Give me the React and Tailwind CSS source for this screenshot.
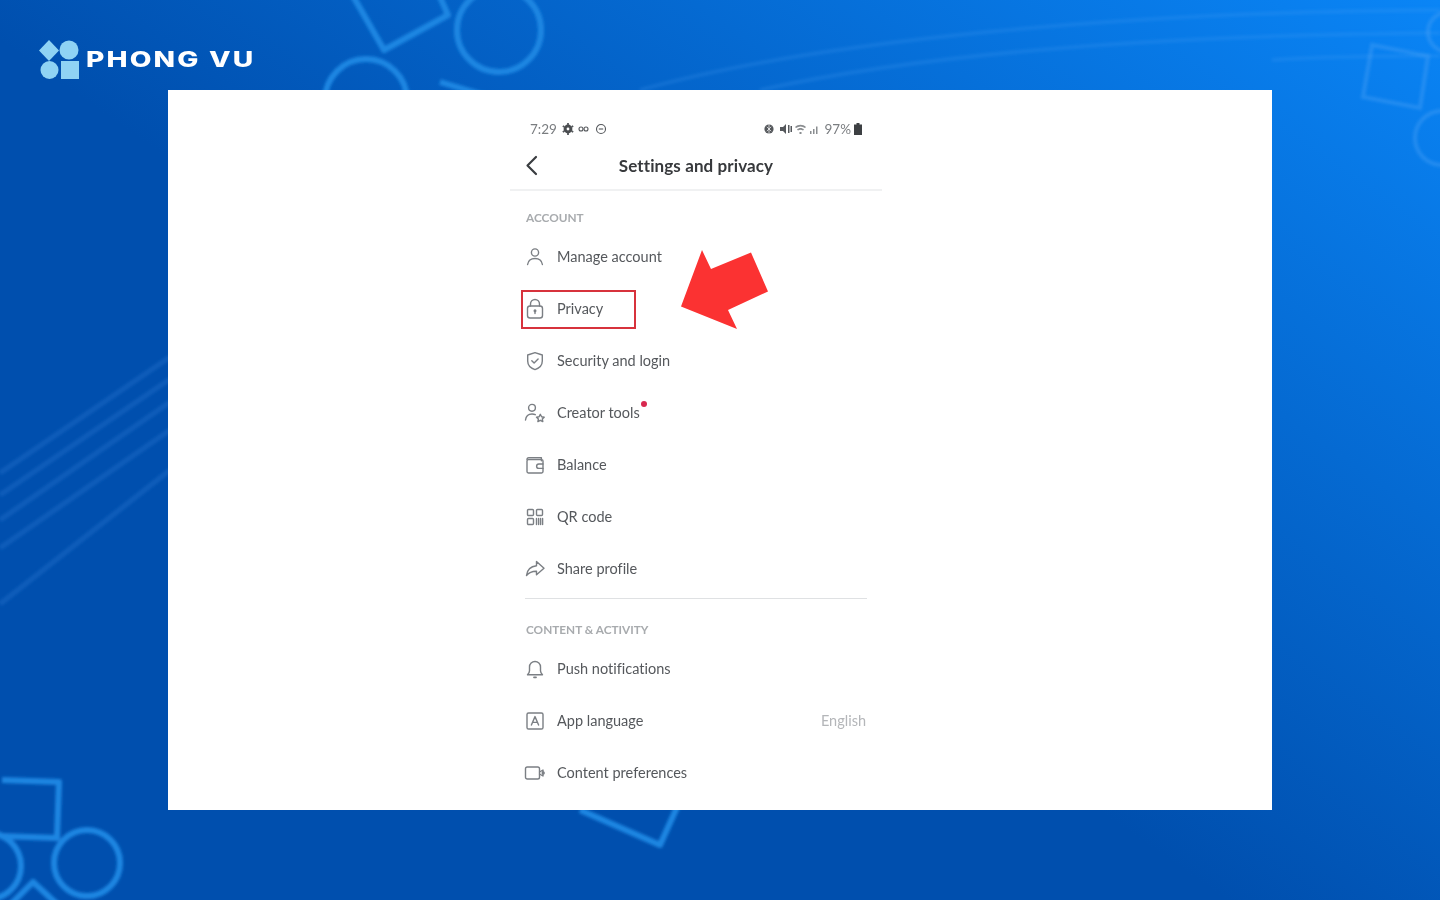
import React from "react";

const ink = "#7b7f84";

const Icon = ({children}) => (
  <svg width="22" height="22" viewBox="0 0 22 22" fill="none" stroke={ink} strokeWidth="1.4" strokeLinecap="round" strokeLinejoin="round">
    {children}
  </svg>
);

const accountRows = [
  {
    label: "Manage account",
    icon: (
      <>
        <circle cx="11" cy="6.500" r="3.600" />
        <path d="M3.600 18.500c.6-4 3.600-6 7.400-6s6.800 2 7.400 6" />
      </>
    ),
  },
  {
    label: "Privacy",
    icon: (
      <>
        <rect x="3.500" y="8" width="15" height="12" rx="2.500" />
        <path d="M6.500 8V6a4.500 4.500 0 0 1 9 0v2" />
        <path d="M11 12.500v3" />
        <circle cx="11" cy="12.800" r="0.800" />
      </>
    ),
  },
  {
    label: "Security and login",
    icon: (
      <>
        <path d="M11 2.600 18.300 5v6c0 4.400-3 7.200-7.300 8.600C6.700 18.200 3.700 15.400 3.700 11V5z" />
        <path d="m7.800 10.800 2.300 2.300 4-4" />
      </>
    ),
  },
  {
    label: "Creator tools",
    dot: true,
    icon: (
      <>
        <circle cx="8" cy="5.800" r="3.400" />
        <path d="M1.500 18c.5-4 3.300-6 6.500-6 1.200 0 2.300.2 3.300.7" />
        <path d="m16.300 12.300 1.300 2.500 2.600.4-1.900 1.800.5 2.600-2.500-1.300-2.400 1.300.5-2.600-1.900-1.800 2.600-.4z" />
      </>
    ),
  },
  {
    label: "Balance",
    icon: (
      <>
        <path d="M3 5.500A1.800 1.800 0 0 1 4.800 3.700h12.600v3" />
        <rect x="3" y="5.600" width="16" height="13.400" rx="1.400" />
        <path d="M19 10h-4.200a2.200 2.200 0 0 0 0 4.400H19" />
      </>
    ),
  },
  {
    label: "QR code",
    icon: (
      <>
        <rect x="3.500" y="3.500" width="6" height="6" rx="1" />
        <rect x="12.500" y="3.500" width="6" height="6" rx="1" />
        <rect x="3.500" y="12.500" width="6" height="6" rx="1" />
        <path d="M12.500 12.500v6M14.600 12.500v6M16.600 12.500v6M18.600 12.500v6" />
      </>
    ),
  },
  {
    label: "Share profile",
    icon: <path d="M12.500 3.500 20 10.300l-7.500 6.500v-3.600c-4.300-.1-7.300 1-10 4.300.6-5.300 4-9 10-9.700z" />,
  },
];

const activityRows = [
  {
    label: "Push notifications",
    icon: (
      <>
        <path d="M3.500 16.800h15c-1.300-1.200-2-2.300-2-4V9a5.500 5.500 0 0 0-11 0v3.800c0 1.700-.7 2.800-2 4z" />
        <path d="M10 19.300h2" strokeWidth="1.800" />
      </>
    ),
  },
  {
    label: "App language",
    value: "English",
    icon: (
      <>
        <rect x="3" y="3" width="16" height="16" rx="1.600" />
        <path d="m7.400 15 3.600-8.400 3.600 8.400M8.600 12.400h4.800" />
      </>
    ),
  },
  {
    label: "Content preferences",
    icon: (
      <>
        <rect x="1.500" y="5" width="14" height="12" rx="1.800" />
        <path d="m15.500 10 3.500-2v6l-3.500-2" />
        <circle cx="19.200" cy="11" r="1" />
      </>
    ),
  },
];

const Row = ({row, boxed}) => (
  <div className="relative flex h-[52px] items-center pl-[14px] pr-[16px]">
    {row.icon && <Icon>{row.icon}</Icon>}
    <span className="relative ml-[11px] text-[14.5px] text-[#55585c] [font-variant-ligatures:none]">
      {row.label}
      {row.dot && <span className="absolute -right-[7px] -top-[1px] h-[6px] w-[6px] rounded-full bg-[#d8284f]" />}
    </span>
    {row.value && <span className="ml-auto text-[14.5px] text-[#b4b6b9]">{row.value}</span>}
    {boxed && <span className="absolute left-[11px] top-[7px] h-[39px] w-[115px] border-2 border-[#d7323c]" />}
  </div>
);

const Backdrop = () => (
  <svg className="absolute inset-0" width="1440" height="900" viewBox="0 0 1440 900" fill="none">
    <defs>
      <filter id="soft">
        <feGaussianBlur stdDeviation="1.400" />
      </filter>
    </defs>
    <g filter="url(#soft)" stroke="#1f86e2" strokeWidth="6" strokeLinejoin="round">
      <path d="M353 -4 384 50 448 15 428 -30" />
      <circle cx="499" cy="30" r="42" />
      <circle cx="366" cy="100" r="41" />
      <path d="M440 82 500 100" />
      <path d="M580 810 660 845 678 805" />
      <path d="M2 780 59 782 57 838 0 836" />
      <circle cx="87" cy="863" r="33" />
      <circle cx="-12" cy="866" r="33" />
      <path d="M10 905 33 882 58 905" />
    </g>
    <g filter="url(#soft)" stroke="#3c9cf5" strokeOpacity="0.5" strokeWidth="4">
      <path d="M1372 45 1428 56 1420 108 1363 97z" />
      <circle cx="1442" cy="138" r="27" />
      <circle cx="1448" cy="32" r="20" />
    </g>
    <g filter="url(#soft)" stroke="#2f7fd6" strokeOpacity="0.3" strokeWidth="5">
      <path d="M0 473 170 357" />
      <path d="M0 495 170 379" />
      <path d="M0 520 170 402" />
      <path d="M0 548 170 430" />
      <path d="M0 604 170 470" />
    </g>
    <g filter="url(#soft)" stroke="#4aa3f7" strokeOpacity="0.2" strokeWidth="3.500">
      <path d="M640 90C820 40 1120 12 1440 10" />
      <path d="M760 90C940 50 1180 35 1440 33" />
      <path d="M1272 60C1330 56 1390 56 1440 56" />
    </g>
  </svg>
);

const App = () => {
  return (
    <div className="relative h-[900px] w-[1440px] overflow-hidden bg-[linear-gradient(35deg,#004fae_0%,#004fae_45%,#0a85f6_100%)] font-['Lato',sans-serif]">
      <Backdrop />

      <header className="relative flex h-[90px] items-start pl-[39px] pt-[40px]">
        <svg width="42" height="40" viewBox="0 0 42 40" fill="#8fd3f4">
          <path d="M10 0 20 10.500 10 21 0 10.500z" />
          <circle cx="30" cy="10" r="9.500" />
          <circle cx="10.500" cy="30" r="9" />
          <rect x="22" y="21" width="18" height="18" />
        </svg>
        <span className="ml-[5px] mt-[7px] origin-left font-['Inter',sans-serif] text-[21px] font-extrabold leading-[26px] tracking-[1.6px] text-white [transform:scaleX(1.34)]">
          PHONG VU
        </span>
      </header>

      <main className="relative mx-[168px] h-[720px] overflow-hidden bg-white">
        <div className="ml-[342px] w-[372px] blur-[0.4px]">
          <div className="mt-[28px] flex h-[22px] items-center justify-between pl-[20px] pr-[20px] text-[13.5px] text-[#7a7d80]">
            <div className="flex items-center gap-[5px]">
              <span>7:29</span>
              <svg width="44" height="12" viewBox="0 0 44 12" fill="none" stroke="#55585c" strokeWidth="1.100">
                <circle cx="6" cy="6" r="4.400" fill="#4a4d50" stroke="none" />
                <circle cx="6" cy="6" r="1.400" fill="#fff" stroke="none" />
                <path d="M6 0v12M0.800 3l10.400 6M0.800 9l10.400-6" strokeWidth="1.800" strokeDasharray="2 8" />
                <circle cx="19" cy="6" r="2" />
                <circle cx="24" cy="6" r="2" />
                <circle cx="39" cy="6" r="4.500" />
                <path d="M36.800 6h4.400" />
              </svg>
            </div>
            <div className="flex items-center gap-[3px]">
              <svg width="58" height="12" viewBox="0 0 58 12" fill="#55585c">
                <circle cx="5" cy="6" r="4.600" />
                <path d="M5 1.500v9M2.800 3.800 7.200 8.200M2.800 8.200 7.200 3.800" stroke="#fff" strokeWidth="0.700" />
                <path d="M16 4h3l3-3v10l-3-3h-3z" />
                <path d="M24 2h1.500v8H24zM26.500 3H28v6h-1.500z" />
                <path d="M31 4c3-3 8-3 11 0l-1 1c-3-2-6-2-9 0zM33 6.500c2-2 5-2 7 0l-1 1c-1.500-1-3.500-1-5 0zM35.500 9h2v2h-2z" fill="#8a8d90" />
                <path d="M46 11h1.500V8H46zM49 11h1.500V6H49zM52 11h1.500V3.500H52z" fill="#8a8d90" />
              </svg>
              <span>97%</span>
              <svg width="8" height="12" viewBox="0 0 8 12" fill="#3d4043">
                <path d="M2.500 0h3v1.500H8V12H0V1.500h2.500z" />
              </svg>
            </div>
          </div>

          <div className="relative flex h-[51px] items-center justify-center border-b-2 border-[#f0f1f2] pt-[2px]">
            <svg className="absolute left-[15px] top-[15px]" width="14" height="22" viewBox="0 0 14 22" fill="none" stroke="#3a3d40" strokeWidth="2.200" strokeLinecap="round" strokeLinejoin="round">
              <path d="M11 2 2.500 10.500 11 19" />
            </svg>
            <h1 className="text-[17px] font-bold tracking-[0.1px] text-[#37393c]">Settings and privacy</h1>
          </div>

          <div className="ml-[16px] mt-[17px] h-[20px] text-[11.8px] font-bold leading-[20px] text-[#a8abae]">ACCOUNT</div>
          <div className="mt-[3px]">
            {accountRows.map((row) => (
              <Row key={row.label} row={row} boxed={row.label === "Privacy"} />
            ))}
          </div>

          <div className="mx-[15px] mt-[3px] h-px bg-[#dfe1e3]" />

          <div className="ml-[16px] mt-[21px] h-[20px] text-[11.8px] font-bold leading-[20px] text-[#a8abae]">CONTENT &amp; ACTIVITY</div>
          <div className="mt-[3px]">
            {activityRows.map((row) => (
              <Row key={row.label} row={row} />
            ))}
          </div>
        </div>

        {/* big red arrow over the list */}
        <svg className="absolute left-[510px] top-[160px]" width="92" height="82" viewBox="0 0 92 82" fill="#fb3232">
          <path d="M24 0 33 19 73 2.500 90 41.500 50 60 59 79 3 56.500z" />
        </svg>
      </main>
    </div>
  );
};

export default App;
